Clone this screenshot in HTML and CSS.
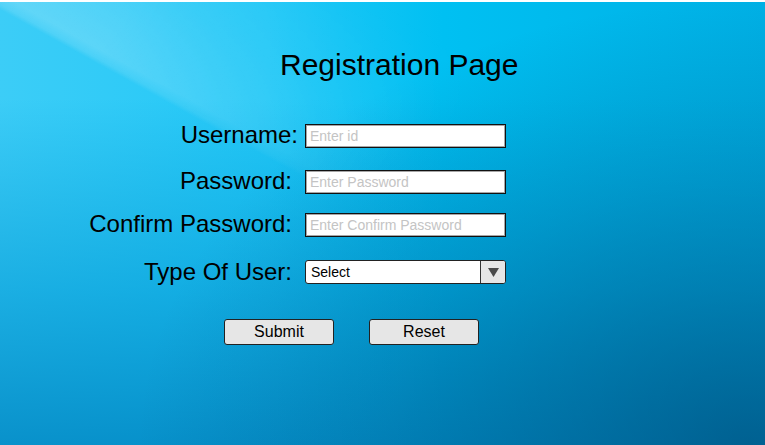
FILE: index.html
```html
<!DOCTYPE html>
<html lang="en">
<head>
<meta charset="utf-8">
<title>Registration Page</title>
<link rel="stylesheet" href="styles.css">
</head>
<body>
<main class="page">
  <h1 class="title">Registration Page</h1>
  <form class="form">
    <div class="row row-user">
      <label class="label label-wide" for="uid">Username:</label>
      <input class="field" id="uid" type="text" placeholder="Enter id">
    </div>
    <div class="row row-pass">
      <label class="label" for="pw">Password:</label>
      <input class="field" id="pw" type="password" placeholder="Enter Password">
    </div>
    <div class="row row-confirm">
      <label class="label" for="cpw">Confirm Password:</label>
      <input class="field" id="cpw" type="password" placeholder="Enter Confirm Password">
    </div>
    <div class="row row-type">
      <label class="label label-centered" for="type">Type Of User:</label>
      <div class="select">
        <span class="select-value">Select</span>
        <span class="select-arrow"><svg width="11" height="9" viewBox="0 0 11 9"><path d="M0 0H11L5.5 9Z" fill="#4a4a4a"/></svg></span>
      </div>
    </div>
    <div class="actions">
      <button class="btn" type="button">Submit</button>
      <button class="btn" type="reset">Reset</button>
    </div>
  </form>
</main>
</body>
</html>
```
FILE: styles.css
```css
html, body {
  margin: 0;
  padding: 0;
  height: 100%;
}
body {
  position: relative;
  font-family: "Liberation Sans", Arial, sans-serif;
  color: #000;
  border-top: 2px solid #fff;
  box-sizing: border-box;
  background:
    radial-gradient(ellipse 80% 100% at 98% 100%, rgba(0,60,100,0.55) 0%, rgba(0,60,100,0.2) 60%, rgba(0,60,100,0) 100%),
    linear-gradient(to bottom, rgba(0,152,212,0) 22%, rgba(0,150,210,0.55) 65%, rgba(0,135,195,0.85) 100%),
    linear-gradient(to right, #3ccdf7 0%, #22c8f7 35%, #00c0f2 58%, #00b0e5 100%);
  overflow: hidden;
}
body::before {
  content: "";
  position: absolute;
  inset: 0;
  pointer-events: none;
  background: linear-gradient(29deg, rgba(255,255,255,0) 50.2%, rgba(255,255,255,0.12) 50.8%, rgba(255,255,255,0.2) 52%, rgba(255,255,255,0.1) 62%, rgba(255,255,255,0) 76%);
  -webkit-mask-image: radial-gradient(ellipse 500px 300px at 0 0, #000 25%, rgba(0,0,0,0) 100%);
  mask-image: radial-gradient(ellipse 500px 300px at 0 0, #000 25%, rgba(0,0,0,0) 100%);
}
.page {
  position: relative;
  display: flex;
  flex-direction: column;
}
.title {
  margin: 46px 0 0 280px;
  font-size: 30px;
  font-weight: normal;
  line-height: 34px;
}
.form {
  display: flex;
  flex-direction: column;
  margin-top: 42px;
}
.row {
  display: flex;
  align-items: center;
  height: 24px;
}
.row-pass { margin-top: 22px; }
.row-confirm { margin-top: 19px; }
.row-type { margin-top: 23px; }
.label {
  width: 292px;
  padding-right: 13px;
  text-align: right;
  font-size: 24px;
  line-height: 24px;
  padding-bottom: 3px;
  box-sizing: content-box;
}
.label-wide {
  width: 298px;
  padding-right: 7px;
}
.label-centered {
  padding-bottom: 0;
}
.field {
  width: 201px;
  height: 24px;
  box-sizing: border-box;
  border: 1px solid #111;
  box-shadow: inset 0 0 0 1px rgba(0,0,0,0.35);
  background: #fff;
  margin: 0;
  padding: 0 4px;
  font-family: "Liberation Sans", Arial, sans-serif;
  font-size: 14px;
  outline: none;
}
.field::placeholder {
  color: #c4c4c4;
}
.select {
  width: 201px;
  height: 24px;
  box-sizing: border-box;
  border: 1px solid #222;
  border-radius: 3px;
  background: #fff;
  display: flex;
  align-items: stretch;
  overflow: hidden;
}
.select-value {
  flex: 1;
  padding-left: 5px;
  font-size: 14px;
  line-height: 22px;
}
.select-arrow {
  width: 24px;
  border-left: 1px solid #333;
  background: #e6e6e6;
  display: flex;
  align-items: center;
  justify-content: center;
}
.actions {
  display: flex;
  gap: 35px;
  margin-top: 35px;
  padding-left: 224px;
}
.btn {
  width: 110px;
  height: 26px;
  box-sizing: border-box;
  border: 1px solid #222;
  border-radius: 3px;
  background: #e6e6e6;
  font-family: "Liberation Sans", Arial, sans-serif;
  font-size: 16px;
  color: #000;
  padding: 0;
  margin: 0;
}
```
